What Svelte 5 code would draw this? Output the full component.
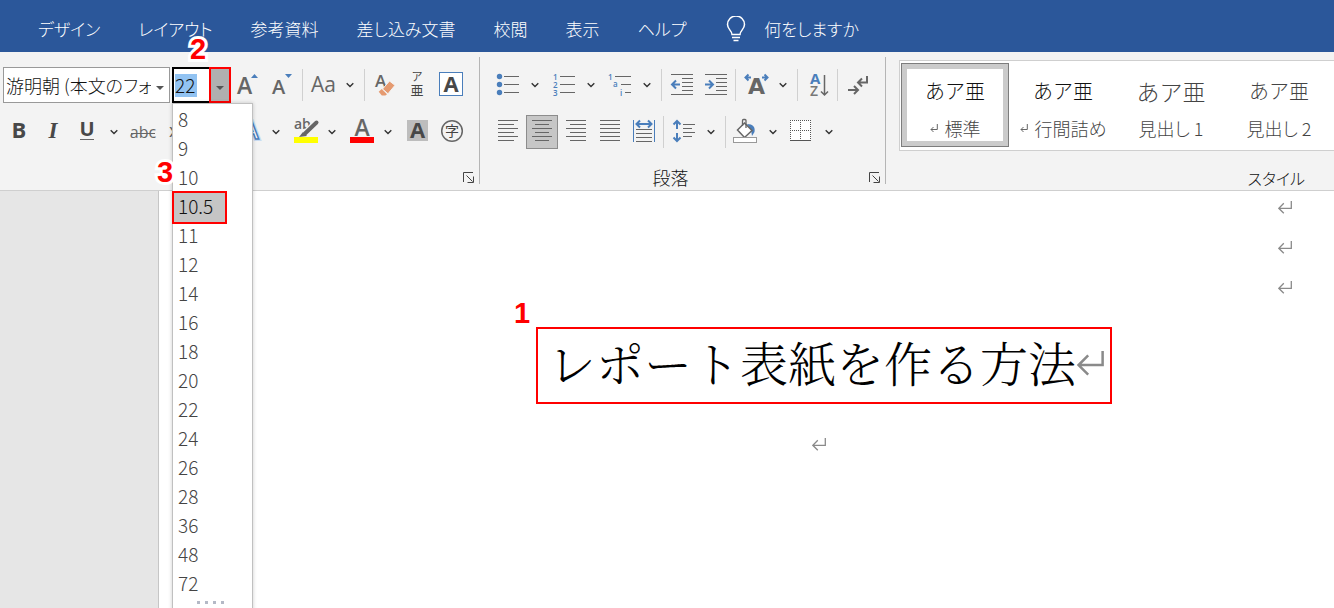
<script>
  const tabs = ['デザイン', 'レイアウト', '参考資料', '差し込み文書', '校閲', '表示', 'ヘルプ'];
  const sizes = ['8', '9', '10', '10.5', '11', '12', '14', '16', '18', '20', '22', '24', '26', '28', '36', '48', '72'];
  const active = '10.5';

  const fontTop = [
    { icon: 'grow', label: 'フォントサイズの拡大' },
    { icon: 'shrink', label: 'フォントサイズの縮小' },
    { sep: true },
    { icon: 'case', label: '文字種の変換', menu: true },
    { sep: true },
    { icon: 'clear', label: '書式のクリア' },
    { icon: 'ruby', label: 'ルビ' },
    { icon: 'boxed', label: '囲み線' }
  ];
  const fontBottom = [
    { icon: 'bold', label: '太字' },
    { icon: 'italic', label: '斜体' },
    { icon: 'underline', label: '下線', menu: true },
    { icon: 'strike', label: '取り消し線' },
    { icon: 'sub', label: '下付き' },
    { icon: 'sup', label: '上付き' },
    { space: true },
    { icon: 'effect', label: '文字の効果', menu: true },
    { icon: 'highlight', label: '蛍光ペンの色', menu: true },
    { icon: 'color', label: 'フォントの色', menu: true },
    { icon: 'shade', label: '文字の網かけ' },
    { icon: 'circled', label: '囲い文字' }
  ];
  const paraTop = [
    { icon: 'bullets', label: '箇条書き', menu: true },
    { icon: 'numbers', label: '段落番号', menu: true },
    { icon: 'levels', label: 'アウトライン', menu: true },
    { sep: true },
    { icon: 'outdent', label: 'インデントを減らす' },
    { icon: 'indent', label: 'インデントを増やす' },
    { sep: true },
    { icon: 'scale', label: '拡張書式', menu: true },
    { sep: true },
    { icon: 'sort', label: '並べ替え' },
    { sep: true },
    { icon: 'marks', label: '編集記号の表示' }
  ];
  const paraBottom = [
    { icon: 'left', label: '左揃え' },
    { icon: 'center', label: '中央揃え', on: true },
    { icon: 'right', label: '右揃え' },
    { icon: 'justify', label: '両端揃え' },
    { icon: 'distribute', label: '均等割り付け' },
    { sep: true },
    { icon: 'spacing', label: '行と段落の間隔', menu: true },
    { sep: true },
    { icon: 'fill', label: '塗りつぶし', menu: true },
    { icon: 'borders', label: '罫線', menu: true }
  ];

  const styles = [
    { name: '標準', mark: true, on: true },
    { name: '行間詰め', mark: true },
    { name: '見出し 1', big: true },
    { name: '見出し 2', light: true }
  ];

  const alignLines = {
    left: [6, 22],
    center: [9, 23],
    right: [10, 26],
    justify: [6, 26]
  };
</script>

{#snippet glyph(name)}
  <svg class="glyph" width="32" height="34" viewBox="0 0 32 34" aria-hidden="true">
    {#if name === 'grow'}
      <text x="4" y="26" font-size="23" font-weight="600">A</text>
      <path class="bf" d="M18 10l3.5-4 3.5 4z" />
    {:else if name === 'shrink'}
      <text x="5" y="26" font-size="20" font-weight="600">A</text>
      <path class="bf" d="M18 6h7l-3.5 4z" />
    {:else if name === 'case'}
      <text x="4" y="24" font-size="21">Aa</text>
    {:else if name === 'clear'}
      <text x="6" y="19" font-size="17" font-weight="600">A</text>
      <path d="M13.500 21L20.500 13l5.500 4.300-7 8.500z" fill="#e59a70" stroke="#f3f3f3" stroke-width="1" />
      <path d="M9.700 23.800l3-2.800 5.300 5.200-1.600 1.300h-3.600z" fill="#e59a70" />
    {:else if name === 'ruby'}
      <text class="jp" x="14" y="13" font-size="11" text-anchor="middle">ア</text>
      <text class="jp" x="14" y="27" font-size="13" text-anchor="middle">亜</text>
    {:else if name === 'boxed'}
      <rect class="bl" x="2.500" y="4.500" width="23" height="23" fill="#fff" />
      <text class="dark" x="14" y="24" font-size="22" font-weight="700" text-anchor="middle">A</text>
    {:else if name === 'bold'}
      <text class="dark" x="16" y="23" font-size="22" font-weight="700" text-anchor="middle">B</text>
    {:else if name === 'italic'}
      <text class="dark serif" x="16" y="23" font-size="23" font-weight="700" font-style="italic" text-anchor="middle">I</text>
    {:else if name === 'underline'}
      <text class="dark" x="16" y="21" font-size="20" font-weight="700" text-anchor="middle">U</text>
      <path class="gl" d="M9 24.500h14" />
    {:else if name === 'strike'}
      <text x="16" y="23" font-size="16" text-anchor="middle">abc</text>
      <path class="gl" d="M4 18.500h24" />
    {:else if name === 'sub'}
      <text x="8" y="22" font-size="18">x</text>
      <text x="18" y="26" font-size="10">2</text>
    {:else if name === 'sup'}
      <text x="8" y="22" font-size="18">x</text>
      <text x="18" y="13" font-size="10">2</text>
    {:else if name === 'effect'}
      <text x="17" y="24" font-size="26" font-weight="600" text-anchor="middle" style:fill="#fff" stroke="#c9dcf2" stroke-width="4">A</text>
      <text x="17" y="24" font-size="26" font-weight="600" text-anchor="middle" style:fill="#fff" stroke="#4a7ebb" stroke-width="1.500">A</text>
    {:else if name === 'highlight'}
      <text x="5" y="14" font-size="14" font-weight="600">ab</text>
      <path d="M27 8L16.500 18.500" stroke="#f3f3f3" stroke-width="7" />
      <path d="M27.500 7.500L16 18.500" stroke="#666" stroke-width="4" stroke-linecap="round" />
      <path d="M14 17l4 4-8 1z" fill="#666" />
      <rect x="5" y="22" width="24" height="6" fill="#ff0" />
    {:else if name === 'color'}
      <text x="17" y="21" font-size="23" font-weight="600" text-anchor="middle">A</text>
      <rect x="5" y="22" width="24" height="6" fill="#f00" />
    {:else if name === 'shade'}
      <rect x="6" y="5" width="21" height="21" fill="#bdbdbd" />
      <text class="dark" x="16.500" y="23" font-size="22" font-weight="700" text-anchor="middle">A</text>
    {:else if name === 'circled'}
      <circle cx="17" cy="16" r="10.300" fill="none" stroke="#666" stroke-width="1.500" />
      <text class="jp" x="17" y="21" font-size="14" text-anchor="middle">字</text>
    {:else if name === 'bullets'}
      <g class="bf"><circle cx="7.500" cy="8.500" r="2.700" /><circle cx="7.500" cy="16.500" r="2.700" /><circle cx="7.500" cy="24.500" r="2.700" /></g>
      <path class="gl" d="M12 8.500h15M12 16.500h15M12 24.500h15" />
    {:else if name === 'numbers'}
      <g class="bt" font-size="8"><text x="5" y="12">1</text><text x="5" y="20">2</text><text x="5" y="28">3</text></g>
      <path class="gl" d="M12 8.500h15M12 16.500h15M12 24.500h15" />
    {:else if name === 'levels'}
      <g class="bt" font-size="8"><text x="4" y="12">1</text><text x="9" y="19">a</text><text x="16" y="28">i</text></g>
      <path class="gl" d="M11 8.500h16M17 16.500h10M21 24.500h6" />
    {:else if name === 'outdent'}
      <path class="gl" d="M5 6.500h22M16 10.500h11M16 14.500h11M16 18.500h11M16 22.500h11M5 26.500h22" />
      <path class="ba" d="M14 16.500H6M10 12.500l-4 4 4 4" />
    {:else if name === 'indent'}
      <path class="gl" d="M5 6.500h22M16 10.500h11M16 14.500h11M16 18.500h11M16 22.500h11M5 26.500h22" />
      <path class="ba" d="M5 16.500h8M9 12.500l4 4-4 4" />
    {:else if name === 'scale'}
      <path class="ba" d="M11 9.500H5.500M8.500 6.500l-3 3 3 3M22 9.500h5.500M24.500 6.500l3 3-3 3" />
      <text class="wide" x="16.500" y="26" font-size="22" text-anchor="middle">A</text>
    {:else if name === 'sort'}
      <text x="8" y="16" font-size="15" font-weight="700" style:fill="#4a7ebb">A</text>
      <text x="8" y="28" font-size="14" font-weight="600" style:fill="#777">Z</text>
      <path class="ga" d="M22.500 7v20M19 23.500l3.500 3.500 3.500-3.500" />
    {:else if name === 'marks'}
      <path class="ga thick" d="M25 8v6.500h-8.500M20 10.500l-4 4 4 4M6 22h9.500M12 18l4 4-4 4" />
    {:else if alignLines[name]}
      {#each [5.5, 13.5, 21.5] as y}
        <path class="gl" d="M6 {y}H26M{alignLines[name][0]} {y + 4}H{alignLines[name][1]}" />
      {/each}
    {:else if name === 'distribute'}
      <path class="bl" d="M5.500 5v22M26.500 5v22" />
      <path class="ba" d="M9 9h14M12 5.500L8.500 9l3.500 3.500M20 5.500L23.500 9 20 12.500" />
      <path class="gl" d="M8 14.500h16M8 18.500h16M8 22.500h16M8 26.500h16" />
    {:else if name === 'spacing'}
      <path class="ba" d="M9 6v8M9 18v8M5.500 9.500L9 6l3.500 3.500M5.500 22.500L9 26l3.500-3.500" />
      <path class="gl" d="M15 9.500h12M15 13.500h9M15 17.500h12M15 21.500h9" />
    {:else if name === 'fill'}
      <path fill="#4a7ebb" d="M17 9c6 0 8.500 3 7.500 8l-2.500 4-1-6z" />
      <path d="M14.500 8l7.500 7.500-7.500 7-7-7.500z" fill="#fff" stroke="#666" stroke-width="1.500" />
      <path d="M12.500 11V5.500q0-1 1-1h1.500q1 0 1 1V13" fill="none" stroke="#666" stroke-width="1.300" />
      <rect x="3.500" y="22.500" width="23" height="5" fill="#fff" stroke="#999" />
    {:else if name === 'borders'}
      <rect x="4" y="5" width="21" height="21" fill="#fff" />
      <path d="M4 5.500h21M4 15.500h21M4.500 5v20M14.500 5v20M24.500 5v20" fill="none" stroke="#555" stroke-dasharray="1 1" />
      <path d="M4 25.500h21" stroke="#555" />
    {/if}
  </svg>
{/snippet}

{#snippet tools(items)}
  {#each items as t}
    {#if t.sep}
      <span class="sep"></span>
    {:else if t.space}
      <span class="space"></span>
    {:else}
      <span class="split">
        <button class="tool" class:on={t.on} aria-label={t.label} aria-pressed={t.on}>{@render glyph(t.icon)}</button>
        {#if t.menu}
          <button class="more" aria-label="{t.label}のオプション">
            <svg width="8" height="6" viewBox="0 0 8 6" aria-hidden="true"><path d="M.7 1.200L4 4.500l3.300-3.300" fill="none" stroke="#333" stroke-width="1.400" /></svg>
          </button>
        {/if}
      </span>
    {/if}
  {/each}
{/snippet}

{#snippet launcher(label)}
  <button class="launcher" aria-label={label}>
    <svg width="11" height="11" viewBox="0 0 11 11" aria-hidden="true"><path d="M.5 10V.5H10M3.500 3.500l6 6M10.500 4.500v6h-6" fill="none" stroke="#444" /></svg>
  </button>
{/snippet}

{#snippet enter(cls)}
  <svg class={cls} viewBox="0 0 14 13" aria-hidden="true"><path d="M13.300 0v7.300H1M5.800 2.300L.8 7.300l5 5" fill="none" stroke="#8a8a8a" stroke-width="1.300" /></svg>
{/snippet}

<div class="app">
  <header class="tabs">
    <nav>
      {#each tabs as tab}
        <a href="#tab">{tab}</a>
      {/each}
    </nav>
    <button class="tell">
      <svg width="20" height="26" viewBox="0 0 20 26" aria-hidden="true">
        <path d="M6 18.500c0-4-4.500-5-4.500-10a8.300 8.300 0 0 1 17 0c0 5-4.500 6-4.500 10zM6 21.500h8M7.500 24.500h5" fill="none" stroke="#fff" stroke-width="1.500" />
      </svg>
      何をしますか
    </button>
  </header>

  <section class="ribbon">
    <div class="group font">
      <div class="row top">
        <div class="combo family">
          <input aria-label="フォント" value="游明朝 (本文のフォ" />
          <button aria-label="フォントの一覧"><i class="caret"></i></button>
        </div>
        <div class="combo size">
          <div class="field"><input aria-label="フォントサイズ" value="22" /></div>
          <button class="flag" aria-label="フォントサイズの一覧"><i class="caret"></i></button>
          <b class="step two">2</b>
          <ul class="list">
            {#each sizes as s}
              <li>
                <button class:active={s === active}>{s}</button>
                {#if s === active}<b class="step three">3</b>{/if}
              </li>
            {/each}
            <li class="grip"><i></i><i></i><i></i><i></i></li>
          </ul>
        </div>
        {@render tools(fontTop)}
      </div>
      <div class="row">{@render tools(fontBottom)}</div>
      <footer><span></span>{@render launcher('フォントの設定')}</footer>
    </div>
    <div class="divider"></div>
    <div class="group para">
      <div class="row top">{@render tools(paraTop)}</div>
      <div class="row">{@render tools(paraBottom)}</div>
      <footer><span>段落</span>{@render launcher('段落の設定')}</footer>
    </div>
    <div class="divider"></div>
    <div class="group styles">
      <div class="gallery">
        {#each styles as s}
          <button class="style" class:on={s.on}>
            <span class="sample" class:big={s.big} class:light={s.big || s.light}>あア亜</span>
            <span class="name">
              {#if s.mark}
                <svg width="8" height="9" viewBox="0 0 8 9" aria-hidden="true"><path d="M7.300 0v5.500H1M3.500 3L1 5.500 3.500 8" fill="none" stroke="#666" /></svg>
              {/if}
              {s.name}
            </span>
          </button>
        {/each}
      </div>
      <footer><span>スタイル</span></footer>
    </div>
  </section>

  <main class="desk">
    <article class="page">
      <p class="end">{@render enter('ret')}</p>
      <p class="end">{@render enter('ret')}</p>
      <p class="end">{@render enter('ret')}</p>
      <h1><b class="step one">1</b>レポート表紙を作る方法{@render enter('ret large')}</h1>
      <p class="mid">{@render enter('ret')}</p>
    </article>
  </main>
</div>

<style>
  :global(body) { margin: 0; }
  .app {
    min-height: 100vh;
    display: flex;
    flex-direction: column;
    position: relative;
    overflow: hidden;
    background: #fff;
    color: #111;
    font: 18px/18px "Noto Sans CJK JP", sans-serif;
    font-weight: 300;
    font-feature-settings: "palt";
  }
  button, input {
    font: inherit;
    font-feature-settings: inherit;
    color: inherit;
    background: none;
    border: 0;
    padding: 0;
    margin: 0;
    box-sizing: border-box;
  }
  .tabs {
    height: 52px;
    display: flex;
    align-items: center;
    gap: 40px;
    padding: 5px 38px 0;
    box-sizing: border-box;
    background: #2b579a;
    color: #fff;
    font-size: 17px;
    white-space: nowrap;
  }
  nav { display: flex; gap: 38px; }
  nav a { color: inherit; text-decoration: none; }
  .tell { display: flex; align-items: center; gap: 18px; }

  .ribbon {
    display: flex;
    height: 133px;
    padding-top: 5px;
    background: #f3f3f3;
    border-bottom: 1px solid #cfcfcf;
  }
  .group {
    display: flex;
    flex-direction: column;
    padding-top: 10px;
    flex: none;
  }
  .font { padding-left: 3px; padding-right: 5px; }
  .para { padding-left: 12px; padding-right: 5px; }
  .font .row { padding-right: 5px; }
  .para .row { padding-right: 6px; }
  .divider { flex: none; width: 1px; background: #b5b5b5; margin-bottom: 6px; }
  .row { display: flex; align-items: center; gap: 2px; height: 34px; }
  .row.top { height: 36px; margin-bottom: 12px; }
  .split { display: flex; }
  .tool { width: 32px; height: 34px; display: block; }
  .tool.on { background: #c6c6c6; outline: 1px solid #8c8c8c; outline-offset: -1px; }
  .more { width: 22px; display: flex; align-items: center; justify-content: center; }
  .sep { width: 1px; height: 32px; background: #d0d0d0; margin: 0 2px 0 1px; }
  .space { width: 2px; }
  .glyph { display: block; overflow: visible; }
  .glyph text { font-family: "Open Sans", sans-serif; font-weight: 400; fill: #666; }
  .glyph text[font-weight="600"] { font-weight: 600; }
  .glyph text[font-weight="700"] { font-weight: 700; }
  .glyph text.dark { fill: #484848; }
  .glyph text.serif { font-family: "Liberation Serif", serif; }
  .glyph text.jp { font-family: "Noto Sans CJK JP", sans-serif; fill: #444; }
  .glyph text.wide { font-family: "DejaVu Sans", sans-serif; font-weight: 700; }
  .glyph .bt text { fill: #4a7ebb; font-weight: 600; }
  .bf { fill: #4a7ebb; }
  .bl { stroke: #4a7ebb; stroke-width: 1; }
  .ba { stroke: #4a7ebb; stroke-width: 2; fill: none; }
  .gl { stroke: #666; }
  .ga { stroke: #666; stroke-width: 1.5; fill: none; }
  .ga.thick { stroke-width: 2; }

  .combo { display: flex; height: 36px; box-sizing: border-box; position: relative; }
  .family { width: 167px; border: 1px solid #999; background: #fff; }
  .family input { flex: 1; min-width: 0; padding-left: 2px; font-size: 18px; }
  .family button { width: 18px; }
  .caret {
    display: inline-block;
    border: 4px solid transparent;
    border-top-color: #555;
    border-bottom: 0;
    vertical-align: middle;
  }
  .size { width: 59px; }
  .field {
    flex: 1;
    display: flex;
    align-items: center;
    padding-left: 1px;
    border: 2px solid #000;
    border-right: 0;
    background: #fff;
  }
  .field input { width: 22px; height: 23px; padding-bottom: 2px; background: #92c3f2; font-size: 19px; font-feature-settings: normal; }
  .flag { width: 22px; border: 2px solid #f00; background: #b0b0b0; }
  .list {
    position: absolute;
    z-index: 2;
    left: 0;
    top: 36px;
    width: 81px;
    box-sizing: border-box;
    margin: 0;
    padding: 2px 0 16px;
    list-style: none;
    background: #fff;
    border: 1px solid #c0c0c0;
    box-shadow: 0 0 4px rgba(0, 0, 0, .2);
    font-size: 19px;
    line-height: 24px;
    font-feature-settings: normal;
    color: #444;
  }
  .list li { position: relative; height: 29px; display: flex; align-items: center; }
  .list button { flex: 1; height: 29px; text-align: left; padding: 0 0 4px 5px; }
  .list .active {
    flex: none;
    width: 55px;
    height: 33px;
    margin-left: -1px;
    padding-left: 4px;
    border: 2px solid #f00;
    background: #c5c5c5;
    color: #111;
  }
  .list .grip { height: 6px; justify-content: center; gap: 5px; padding-right: 4px; }
  .grip i { width: 3px; height: 3px; background: #b4b9c6; }

  .step {
    position: absolute;
    z-index: 3;
    color: #f00;
    font: 700 29px/30px "Liberation Sans", sans-serif;
    -webkit-text-stroke: 6px #fff;
    paint-order: stroke;
  }
  .two { left: 18px; top: -33px; }
  .three { left: -16px; top: -36px; }
  .one { left: -24px; top: -31px; }

  footer { display: flex; align-items: center; height: 18px; margin-top: 19px; }
  footer span { flex: 1; text-align: center; }
  .para footer { margin-left: -12px; }
  .para footer span { padding-right: 8px; }
  .launcher { height: 18px; display: flex; align-items: center; }

  .styles { flex: 1 0 auto; width: 0; padding: 3px 0 0 13px; }
  .gallery {
    display: flex;
    background: #fff;
    border: 1px solid #cfcfcf;
    border-right: 0;
    padding: 2px 0 3px 1px;
    height: 84px;
  }
  .styles footer { margin-top: 18px; font-size: 16px; }
  .styles footer span { text-align: right; padding-right: 29px; }
  .style {
    flex: none;
    width: 108px;
    height: 84px;
    display: flex;
    flex-direction: column;
    align-items: center;
    justify-content: center;
    gap: 16px;
    padding-top: 6px;
    white-space: nowrap;
  }
  .style.on { border: 1px solid #7d7d7d; box-shadow: inset 0 0 0 5px #cbcbcb; }
  .sample { font-size: 20px; line-height: 24px; color: #111; font-feature-settings: normal; }
  .sample.big { font-size: 23px; }
  .sample.light { color: #444; }
  .name { display: flex; align-items: center; gap: 7px; color: #444; }

  .desk { flex: 1; display: flex; background: #e6e6e6; padding-left: 158px; }
  .page {
    flex: 1;
    background: #fff;
    border-left: 1px solid #c6c6c6;
    padding: 0 42px 0 197px;
    display: flex;
    flex-direction: column;
    align-items: center;
  }
  .page p { margin: 0 0 8px; height: 32px; display: flex; align-items: center; }
  .end { align-self: flex-end; }
  .page .mid { margin-top: 24px; padding-right: 10px; }
  .ret { width: 14px; height: 13px; }
  .ret.large { width: 27px; height: 25px; margin: 4px 0 0 1px; }
  h1 {
    position: relative;
    display: flex;
    align-items: center;
    margin: 16px 0 0;
    padding: 0 6px 8px 10px;
    height: 65px;
    border: 2px solid #f00;
    color: #000;
    font: 48px/65px "Noto Serif CJK JP", "Noto Sans CJK JP", serif;
    font-weight: 300;
    font-feature-settings: normal;
    white-space: nowrap;
  }
</style>
